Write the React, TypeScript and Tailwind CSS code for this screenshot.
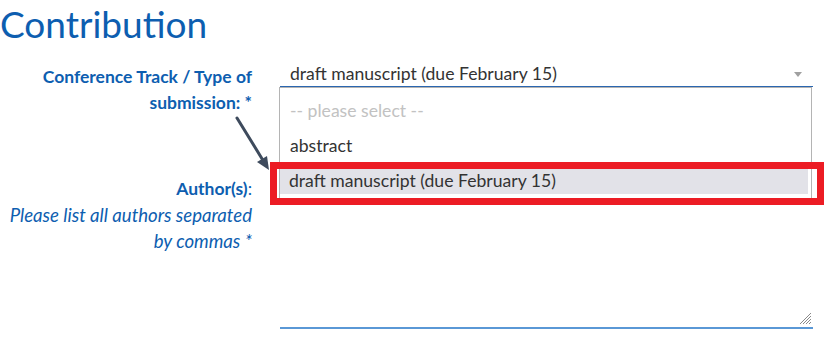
import React from "react";

const blue = "text-[#0d5eb0]";

const Arrow = () => (
  <svg className="absolute left-[230px] top-[112px]" width="44" height="62" viewBox="0 0 44 62">
    <line x1="7" y1="6" x2="34" y2="50" stroke="#3e4b5d" strokeWidth="3" strokeLinecap="round" />
    <polygon points="39,58 27,50 37,44" fill="#3e4b5d" />
  </svg>
);

const Grip = () => (
  <svg className="absolute right-[1px] bottom-[2px]" width="13" height="13" viewBox="0 0 13 13">
    <g stroke="#8a8a8a" strokeWidth="1">
      <line x1="12" y1="1" x2="1" y2="12" />
      <line x1="12" y1="4" x2="4" y2="12" />
      <line x1="12" y1="7" x2="7" y2="12" />
      <line x1="12" y1="10" x2="10" y2="12" />
    </g>
  </svg>
);

export default function App() {
  return (
    <div className="relative w-[830px] h-[338px] overflow-hidden bg-white font-['Lato',sans-serif]">
      <h1 className={`pt-[2px] text-[37px] leading-[44px] ${blue}`}>Contribution</h1>

      <div className="mt-[15px] grid grid-cols-[252px_533px] gap-x-[28px]">
        {/* row 1 */}
        <div className={`h-[106px] pt-[3px] text-right text-[17.5px] leading-[26px] font-bold ${blue}`}>
          Conference Track / Type of
          <br />
          submission: *
        </div>
        <div className="relative h-[26px]">
          <div className="flex h-[26px] items-end justify-between border-b-[1.5px] border-[#2a66b0] pl-[10px] pr-[11px] pb-[1px] text-[17.6px] leading-[22px] text-[#333]">
            <span>draft manuscript (due February 15)</span>
            <span className="mb-[8px] h-0 w-0 border-x-[4px] border-t-[5px] border-x-transparent border-t-[#a0a0a0]" />
          </div>
          <ul className="absolute left-[-1px] right-[1px] top-[26px] z-10 border border-[#b4b4b4] bg-white pt-[10px] pb-[8px] pr-[3px] text-[17.6px] leading-[26px] text-[#333]">
            <li className="h-[26px] pl-[10px] text-[#c2c2c2]">-- please select --</li>
            <li className="mt-[9px] h-[26px] pl-[10px]">abstract</li>
            <li className="mt-[9px] h-[26px] bg-[#e2e2e8] pl-[9px]">draft manuscript (due February 15)</li>
          </ul>
        </div>

        {/* row 2 */}
        <div className={`pt-[8px] text-right leading-[27px] ${blue}`}>
          <div className="text-[17.5px]">
            <span className="font-bold">Author(s)</span>:
          </div>
          <div className="text-[18.6px] italic">Please list all authors separated</div>
          <div className="text-[18.6px] leading-[25px] italic">by commas *</div>
        </div>
        <div className="relative h-[162px] border-b-2 border-[#5a98d6]">
          <Grip />
        </div>
      </div>

      <Arrow />
      <div className="absolute left-[270px] top-[162px] z-20 h-[43px] w-[554px] border-[7px] border-[#ec1c24]" />
    </div>
  );
}
